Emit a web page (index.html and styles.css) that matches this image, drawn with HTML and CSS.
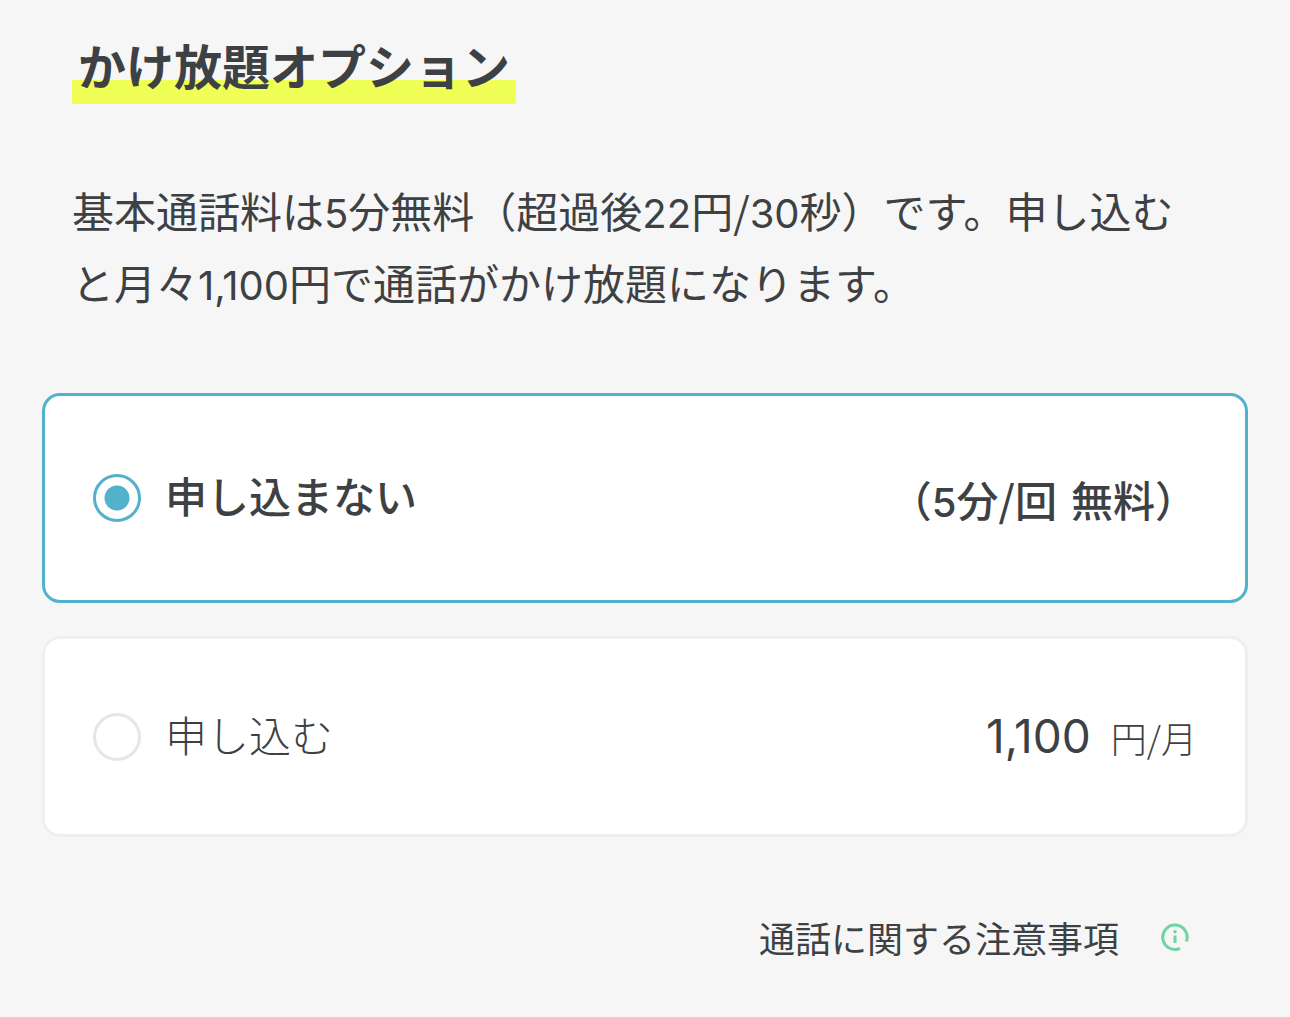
FILE: index.html
```html
<!DOCTYPE html>
<html lang="ja">
<head>
<meta charset="utf-8">
<meta name="viewport" content="width=device-width, initial-scale=1">
<title>かけ放題オプション</title>
<link rel="stylesheet" href="styles.css">
</head>
<body>
<main class="page">
  <h1 class="title"><span class="title-mark">かけ放題オプション</span></h1>
  <p class="lead">基本通話料は<span class="num">5</span>分無料（超過後<span class="num">22</span>円/<span class="num">30</span>秒）です。申し込むと月々<span class="num">1,100</span>円で通話がかけ放題になります。</p>
  <form class="options">
    <label class="option option-selected">
      <input class="radio" type="radio" name="plan" value="none" checked>
      <span class="name">申し込まない</span>
      <span class="note"><span>（<span class="num">5</span>分/回</span><span>無料）</span></span>
    </label>
    <label class="option">
      <input class="radio" type="radio" name="plan" value="unlimited">
      <span class="name">申し込む</span>
      <span class="price"><span class="amount">1,100</span><span class="unit">円/月</span></span>
    </label>
  </form>
  <a class="notice" href="#notice">
    <span>通話に関する注意事項</span>
    <svg class="info" viewBox="0 0 28 28" aria-hidden="true">
      <path d="M19 25.3A12.2 12.2 0 1 1 25.4 18.4" />
      <path d="M14 12.5V20" />
      <circle cx="14" cy="8.8" r="1.7" />
    </svg>
  </a>
</main>
</body>
</html>
```
FILE: styles.css
```css
* { box-sizing: border-box; }

body {
  margin: 0;
  background: #f6f6f6;
  color: #3e4144;
  font-family: "Noto Sans CJK JP", sans-serif;
  font-size: 42px;
  line-height: 60px;
}

.page { padding: 32px 42px; }

.title {
  margin: 0 30px;
  font-size: 48px;
  font-weight: 700;
  line-height: 64px;
}

.title-mark {
  display: inline-block;
  padding: 0 6px 8px;
  background: linear-gradient(transparent 48px, #efff55 48px);
}

.lead {
  margin: 70px 36px 0 30px;
  line-height: 72px;
}

.num,
.amount { font-family: "Inter", "Noto Sans CJK JP", sans-serif; }

.num {
  font-size: 40px;
  line-height: 1;
}

.options {
  display: grid;
  gap: 33px;
  margin-top: 75px;
}

.option {
  display: flex;
  align-items: center;
  padding: 0 48px;
  min-height: 201px;
  border: 3px solid #efefee;
  border-radius: 18px;
  background: #fff;
  font-weight: 300;
}

.option-selected {
  min-height: 210px;
  border-color: #52b1cb;
  font-weight: 500;
}

.radio {
  appearance: none;
  flex: none;
  width: 48px;
  height: 48px;
  margin: 0 24px 0 0;
  border: 3px solid #e6e6e6;
  border-radius: 50%;
  background: #fff;
}

.radio:checked {
  border-color: #52b1cb;
  background: radial-gradient(circle, #52b1cb 12px, #fff 13px);
}

.name { padding-bottom: 6px; }

.note {
  display: flex;
  gap: 14px;
  margin-left: auto;
  padding-top: 2px;
}

.price {
  display: flex;
  align-items: baseline;
  gap: 20px;
  margin-left: auto;
}

.amount { font-size: 46px; font-weight: 400; }
.unit { font-size: 36px; }

.notice {
  display: flex;
  align-items: center;
  justify-content: flex-end;
  gap: 42px;
  margin-top: 73px;
  padding-right: 59px;
  color: inherit;
  font-size: 36px;
  line-height: 54px;
  text-decoration: none;
}

.info {
  width: 28px;
  height: 28px;
  fill: none;
  stroke: #6fd3a5;
  stroke-width: 3;
}

.info circle { fill: #6fd3a5; stroke: none; }
```
